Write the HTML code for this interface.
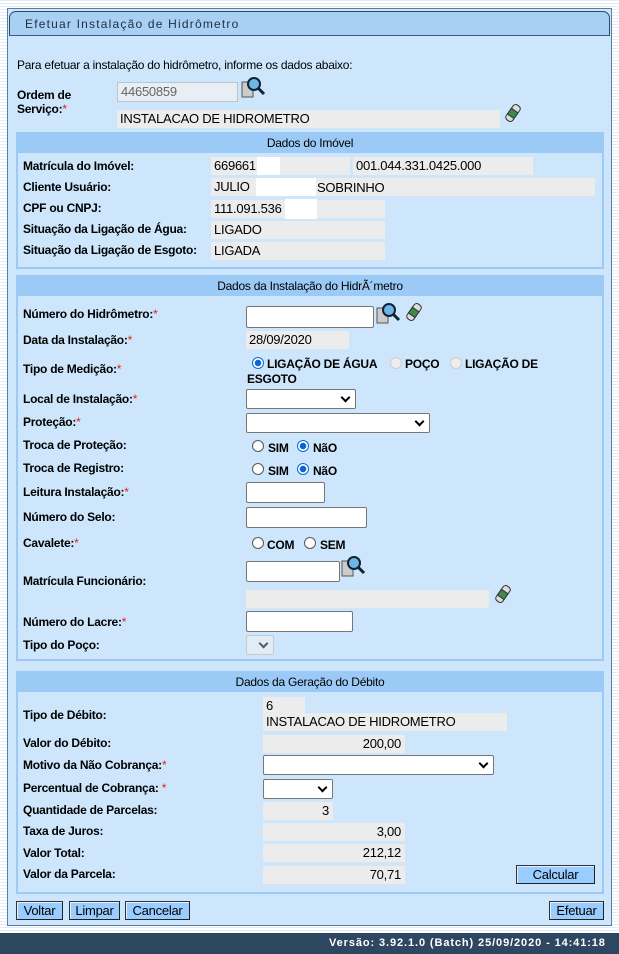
<!DOCTYPE html>
<html><head><meta charset="utf-8"><style>
*{box-sizing:border-box;margin:0;padding:0}
body{width:619px;height:954px;position:relative;overflow:hidden;background:#fff repeating-linear-gradient(0deg,#fff 0 2px,#e3ecf6 2px 3px);font-family:"Liberation Sans",Arial,sans-serif;font-size:12px;color:#000;letter-spacing:-0.25px}
div,span{position:absolute}
#panel{left:7px;top:8px;width:605px;height:918px;background:#cde6fc;border:1px solid #5a7ea3}
#title{left:9px;top:11px;width:601px;height:25px;background:#a9cff3;border:1px solid #2a4a6a;border-radius:7px 7px 0 0;border-bottom:1px solid #3a5c80}
#title span{left:15px;top:5px;font-size:12px;letter-spacing:1.2px;color:#1a2f44}
.sec{border:2px solid #9ccaf6;background:#cde6fc}
.hd{background:#9ccaf6;text-align:center;height:19px;line-height:18px;font-size:12px}
.l{font-weight:bold}
.r{color:#e02020;font-weight:normal}
.f{background:#ececec;height:18px;line-height:18px;padding-left:3px;font-size:13px}
.in{background:#fff;border:1px solid #767676;border-radius:2px}
.sel{background:#fff;border:1px solid #767676;border-radius:2px}
.sel:after{content:"";position:absolute;right:6px;top:4px;width:5px;height:5px;border-right:2px solid #000;border-bottom:2px solid #000;transform:rotate(45deg)}
.rad{width:12px;height:12px;border:1px solid #555;border-radius:50%;background:#fff}
.rad.on{border-color:#0a66d8;background:radial-gradient(#0a66d8 0 3px,#fff 3.5px)}
.rad.dis{border-color:#ccc;background:#eee}
.btn{background:#99ccff;border:1px solid #333;border-right-color:#222;border-bottom-color:#222;height:19px;line-height:17px;text-align:center;font-size:13px;box-shadow:inset 1px 1px 0 #e0f0ff}
.rt{text-align:right;padding-right:4px}
.w{background:#fff}
</style></head><body>
<div id="panel"></div>
<div id="title"><span>Efetuar Instalação de Hidrômetro</span></div>

<span style="left:17px;top:58px">Para efetuar a instalação do hidrômetro, informe os dados abaixo:</span>
<span class="l" style="left:17px;top:88px;line-height:14px">Ordem de<br>Serviço:<span class="r" style="position:static">*</span></span>
<div class="f" style="left:117px;top:82px;width:121px;height:20px;color:#666;border:1px solid #b8c6d4;background:#e8eef4">44650859</div>
<svg style="position:absolute;left:241px;top:76px" width="26" height="24" viewBox="0 0 26 24"><rect x="1" y="6" width="11" height="15" fill="#ccc" stroke="#555"/><circle cx="13" cy="8" r="6" fill="#6fb6e8" stroke="#123" stroke-width="2"/><path d="M17 12l6 6" stroke="#123" stroke-width="3"/></svg>
<svg style="position:absolute;left:503px;top:103px" width="20" height="20" viewBox="0 0 20 20"><g transform="rotate(35 10 10)"><rect x="6" y="1" width="8" height="18" rx="3" fill="#ddd" stroke="#333"/><rect x="6" y="7" width="8" height="7" fill="#3d8a4a" stroke="#333"/></g></svg>
<div class="f" style="left:117px;top:110px;width:383px">INSTALACAO DE HIDROMETRO</div>

<div class="sec" style="left:16px;top:132px;width:588px;height:137px">
<div class="hd" style="left:0;top:0;width:584px">Dados do Imóvel</div></div>
<span class="l" style="left:23px;top:159px">Matrícula do Imóvel:</span>
<div class="f" style="left:211px;top:157px;width:139px">669661</div><div class="w" style="left:257px;top:157px;width:23px;height:18px"></div>
<div class="f" style="left:353px;top:157px;width:180px">001.044.331.0425.000</div>
<span class="l" style="left:23px;top:180px">Cliente Usuário:</span>
<div class="f" style="left:211px;top:178px;width:384px">JULIO</div><div class="w" style="left:256px;top:178px;width:60px;height:18px"></div><span style="left:317px;top:180px;font-size:13px">SOBRINHO</span>
<span class="l" style="left:23px;top:201px">CPF ou CNPJ:</span>
<div class="f" style="left:211px;top:200px;width:174px">111.091.536</div><div class="w" style="left:285px;top:199px;width:32px;height:20px"></div>
<span class="l" style="left:23px;top:222px">Situação da Ligação de Água:</span>
<div class="f" style="left:211px;top:221px;width:174px">LIGADO</div>
<span class="l" style="left:23px;top:243px">Situação da Ligação de Esgoto:</span>
<div class="f" style="left:211px;top:242px;width:174px">LIGADA</div>

<div class="sec" style="left:16px;top:275px;width:588px;height:386px">
<div class="hd" style="left:0;top:0;width:584px">Dados da Instalação do HidrÃ´metro</div></div>
<span class="l" style="left:23px;top:307px">Número do Hidrômetro:<span class="r" style="position:static">*</span></span>
<div class="in" style="left:246px;top:306px;width:128px;height:22px"></div>
<svg style="position:absolute;left:376px;top:302px" width="26" height="24" viewBox="0 0 26 24"><rect x="1" y="6" width="11" height="15" fill="#ccc" stroke="#555"/><circle cx="13" cy="8" r="6" fill="#6fb6e8" stroke="#123" stroke-width="2"/><path d="M17 12l6 6" stroke="#123" stroke-width="3"/></svg>
<svg style="position:absolute;left:404px;top:302px" width="20" height="20" viewBox="0 0 20 20"><g transform="rotate(35 10 10)"><rect x="6" y="1" width="8" height="18" rx="3" fill="#ddd" stroke="#333"/><rect x="6" y="7" width="8" height="7" fill="#3d8a4a" stroke="#333"/></g></svg>
<span class="l" style="left:23px;top:333px">Data da Instalação:<span class="r" style="position:static">*</span></span>
<div class="f" style="left:246px;top:331px;width:103px">28/09/2020</div>
<span class="l" style="left:23px;top:362px">Tipo de Medição:<span class="r" style="position:static">*</span></span>
<div class="rad on" style="left:252px;top:357px"></div><span class="l" style="left:267px;top:357px">LIGAÇÃO DE ÁGUA</span>
<div class="rad dis" style="left:390px;top:357px"></div><span class="l" style="left:405px;top:357px">POÇO</span>
<div class="rad dis" style="left:450px;top:357px"></div><span class="l" style="left:465px;top:357px">LIGAÇÃO DE</span>
<span class="l" style="left:247px;top:372px">ESGOTO</span>
<span class="l" style="left:23px;top:392px">Local de Instalação:<span class="r" style="position:static">*</span></span>
<div class="sel" style="left:246px;top:389px;width:110px;height:20px"></div>
<span class="l" style="left:23px;top:415px">Proteção:<span class="r" style="position:static">*</span></span>
<div class="sel" style="left:246px;top:413px;width:184px;height:20px"></div>
<span class="l" style="left:23px;top:438px">Troca de Proteção:</span>
<div class="rad" style="left:252px;top:440px"></div><span class="l" style="left:268px;top:441px">SIM</span>
<div class="rad on" style="left:297px;top:440px"></div><span class="l" style="left:313px;top:441px">NãO</span>
<span class="l" style="left:23px;top:461px">Troca de Registro:</span>
<div class="rad" style="left:252px;top:463px"></div><span class="l" style="left:268px;top:464px">SIM</span>
<div class="rad on" style="left:297px;top:463px"></div><span class="l" style="left:313px;top:464px">NãO</span>
<span class="l" style="left:23px;top:485px">Leitura Instalação:<span class="r" style="position:static">*</span></span>
<div class="in" style="left:246px;top:482px;width:79px;height:21px"></div>
<span class="l" style="left:23px;top:510px">Número do Selo:</span>
<div class="in" style="left:246px;top:507px;width:121px;height:21px"></div>
<span class="l" style="left:23px;top:536px">Cavalete:<span class="r" style="position:static">*</span></span>
<div class="rad" style="left:252px;top:537px"></div><span class="l" style="left:267px;top:538px">COM</span>
<div class="rad" style="left:304px;top:537px"></div><span class="l" style="left:320px;top:538px">SEM</span>
<span class="l" style="left:23px;top:574px">Matrícula Funcionário:</span>
<div class="in" style="left:246px;top:561px;width:94px;height:21px"></div>
<svg style="position:absolute;left:341px;top:555px" width="26" height="24" viewBox="0 0 26 24"><rect x="1" y="6" width="11" height="15" fill="#ccc" stroke="#555"/><circle cx="13" cy="8" r="6" fill="#6fb6e8" stroke="#123" stroke-width="2"/><path d="M17 12l6 6" stroke="#123" stroke-width="3"/></svg>
<div class="f" style="left:246px;top:590px;width:243px"></div>
<svg style="position:absolute;left:493px;top:584px" width="20" height="20" viewBox="0 0 20 20"><g transform="rotate(35 10 10)"><rect x="6" y="1" width="8" height="18" rx="3" fill="#ddd" stroke="#333"/><rect x="6" y="7" width="8" height="7" fill="#3d8a4a" stroke="#333"/></g></svg>
<span class="l" style="left:23px;top:615px">Número do Lacre:<span class="r" style="position:static">*</span></span>
<div class="in" style="left:246px;top:611px;width:107px;height:21px"></div>
<span class="l" style="left:23px;top:638px">Tipo do Poço:</span>
<div class="sel" style="left:246px;top:635px;width:28px;height:20px;background:#f0f0f0;border-color:#bbb;opacity:.6"></div>

<div class="sec" style="left:16px;top:671px;width:588px;height:223px">
<div class="hd" style="left:0;top:0;width:584px">Dados da Geração do Débito</div></div>
<span class="l" style="left:23px;top:708px">Tipo de Débito:</span>
<div class="f" style="left:263px;top:697px;width:42px">6</div>
<div class="f" style="left:263px;top:713px;width:244px">INSTALACAO DE HIDROMETRO</div>
<span class="l" style="left:23px;top:736px">Valor do Débito:</span>
<div class="f rt" style="left:263px;top:735px;width:142px">200,00</div>
<span class="l" style="left:23px;top:758px">Motivo da Não Cobrança:<span class="r" style="position:static">*</span></span>
<div class="sel" style="left:263px;top:755px;width:231px;height:20px"></div>
<span class="l" style="left:23px;top:781px">Percentual de Cobrança: <span class="r" style="position:static">*</span></span>
<div class="sel" style="left:263px;top:779px;width:70px;height:20px"></div>
<span class="l" style="left:23px;top:803px">Quantidade de Parcelas:</span>
<div class="f rt" style="left:263px;top:802px;width:70px">3</div>
<span class="l" style="left:23px;top:824px">Taxa de Juros:</span>
<div class="f rt" style="left:263px;top:823px;width:142px">3,00</div>
<span class="l" style="left:23px;top:846px">Valor Total:</span>
<div class="f rt" style="left:263px;top:844px;width:142px">212,12</div>
<span class="l" style="left:23px;top:867px">Valor da Parcela:</span>
<div class="f rt" style="left:263px;top:866px;width:142px">70,71</div>
<div class="btn" style="left:516px;top:865px;width:79px">Calcular</div>

<div class="btn" style="left:16px;top:901px;width:47px">Voltar</div>
<div class="btn" style="left:69px;top:901px;width:51px">Limpar</div>
<div class="btn" style="left:125px;top:901px;width:65px">Cancelar</div>
<div class="btn" style="left:549px;top:901px;width:55px">Efetuar</div>

<div style="left:0;top:933px;width:619px;height:21px;background:#2e4761"></div>
<span style="left:329px;top:937px;color:#fff;font-weight:bold;font-size:11px;letter-spacing:0.9px">Versão: 3.92.1.0 (Batch) 25/09/2020 - 14:41:18</span>
</body></html>
